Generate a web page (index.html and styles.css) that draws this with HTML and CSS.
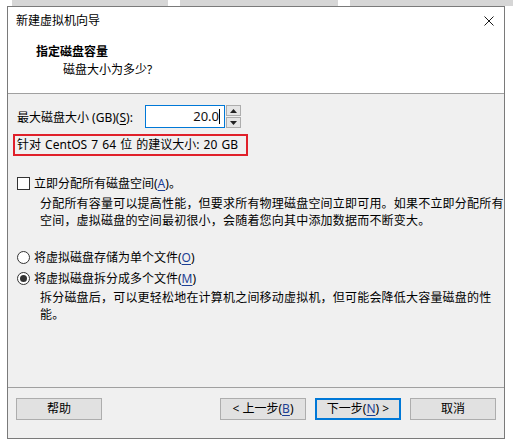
FILE: index.html
```html
<!DOCTYPE html>
<html lang="zh-CN">
<head>
    <meta charset="UTF-8">
    <title>新建虚拟机向导</title>
    <link rel="stylesheet" href="styles.css">
</head>
<body>
    <div class="desk-strip">
        <div class="strip-gap strip-first"></div>
        <div class="strip-block strip-a"></div>
        <div class="strip-gap"></div>
        <div class="strip-block strip-b"></div>
        <div class="strip-gap"></div>
        <div class="strip-block strip-c"></div>
    </div>

    <div class="window">
        <div class="header">
            <div class="title-bar">
                <span class="title-text">新建虚拟机向导</span>
                <svg class="close-icon" width="10" height="10" viewBox="0 0 10 10">
                    <path d="M0.5 0.5 L9.5 9.5 M9.5 0.5 L0.5 9.5" stroke="#1a1a1a" stroke-width="1" fill="none"/>
                </svg>
            </div>
            <div class="page-title">指定磁盘容量</div>
            <div class="page-subtitle">磁盘大小为多少?</div>
        </div>

        <div class="content">
            <div class="size-row">
                <span class="size-label">最大磁盘大小 (GB)(<u>S</u>):</span>
                <div class="size-input">20.0<span class="caret"></span></div>
                <div class="spinner">
                    <div class="spin-btn">
                        <svg width="7" height="4" viewBox="0 0 7 4"><path d="M3.5 0 L7 4 L0 4 Z" fill="#222"/></svg>
                    </div>
                    <div class="spin-btn">
                        <svg width="7" height="4" viewBox="0 0 7 4"><path d="M0 0 L7 0 L3.5 4 Z" fill="#222"/></svg>
                    </div>
                </div>
            </div>

            <div class="hint-box">针对 CentOS 7 64 位 的建议大小: 20 GB</div>

            <div class="option-row check-row">
                <span class="checkbox"></span>
                <span>立即分配所有磁盘空间(<u class="key">A</u>)。</span>
            </div>
            <div class="option-desc">
                分配所有容量可以提高性能，但要求所有物理磁盘空间立即可用。如果不立即分配所有<br>
                空间，虚拟磁盘的空间最初很小，会随着您向其中添加数据而不断变大。
            </div>

            <div class="option-row radio-first">
                <span class="radio"></span>
                <span>将虚拟磁盘存储为单个文件(<u class="key">O</u>)</span>
            </div>
            <div class="option-row radio-second">
                <span class="radio radio-on"></span>
                <span>将虚拟磁盘拆分成多个文件(<u class="key">M</u>)</span>
            </div>
            <div class="option-desc split-desc">
                拆分磁盘后，可以更轻松地在计算机之间移动虚拟机，但可能会降低大容量磁盘的性<br>
                能。
            </div>

            <div class="footer">
                <div class="button">帮助</div>
                <div class="footer-spacer"></div>
                <div class="button">&lt; 上一步(<u class="key">B</u>)</div>
                <div class="button button-default">下一步(<u class="key">N</u>) &gt;</div>
                <div class="button">取消</div>
            </div>
        </div>
    </div>
</body>
</html>
```

FILE: styles.css
```css
body {
    margin: 0;
    background-color: #ffffff;
    font-family: "Noto Sans", "Noto Sans CJK SC", sans-serif;
    font-size: 12px;
    color: #000000;
    width: 513px;
    height: 445px;
    overflow: hidden;
}

u {
    text-decoration-thickness: 1px;
    text-underline-offset: 2px;
}

.key {
    color: #1c3f94;
}

/* the desktop behind the dialog */
.desk-strip {
    display: flex;
    height: 6px;
}

.strip-first {
    width: 107px;
}

.strip-gap {
    width: 12px;
    background-color: #ffffff;
}

.strip-block {
    background-color: #d6d6d6;
}

.strip-a {
    width: 156px;
}

.strip-b {
    width: 158px;
}

.strip-c {
    flex: 1;
}

.window {
    margin-left: 7px;
    width: 496px;
    height: 431px;
    border: 1px solid #7a7a7a;
    background-color: #f0f0f0;
    display: flex;
    flex-direction: column;
}

.header {
    background-color: #ffffff;
    height: 86px;
    border-bottom: 1px solid #a0a0a0;
}

.title-bar {
    display: flex;
    align-items: center;
    justify-content: space-between;
    height: 28px;
    padding: 0 10px 0 8px;
}

.title-text {
    line-height: 28px;
}

.page-title {
    font-weight: bold;
    line-height: 16px;
    margin-top: 9px;
    padding-left: 28px;
}

.page-subtitle {
    line-height: 16px;
    margin-top: 2px;
    padding-left: 55px;
}

.content {
    flex: 1;
    display: flex;
    flex-direction: column;
    padding-left: 9px;
}

.size-row {
    display: flex;
    align-items: center;
    margin-top: 11px;
    height: 23px;
}

.size-label {
    width: 128px;
    flex-shrink: 0;
    white-space: nowrap;
}

.size-input {
    width: 74px;
    height: 21px;
    border: 1px solid #0078d7;
    background-color: #ffffff;
    text-align: right;
    line-height: 21px;
    padding-right: 4px;
    font-size: 13px;
    color: #111;
}

.caret {
    display: inline-block;
    width: 1px;
    height: 15px;
    background-color: #000;
    vertical-align: -3px;
}

.spinner {
    margin-left: 1px;
    display: flex;
    flex-direction: column;
    gap: 1px;
}

.spin-btn {
    width: 13px;
    height: 9px;
    border: 1px solid #adadad;
    background-color: #e5e5e5;
    display: flex;
    align-items: center;
    justify-content: center;
}

.hint-box {
    margin-top: 6px;
    margin-left: -4px;
    width: 229px;
    height: 18px;
    border: 2px solid #e0202a;
    padding-left: 2px;
    line-height: 18px;
    white-space: nowrap;
    word-spacing: 1px;
}

.option-row {
    display: flex;
    align-items: center;
    height: 16px;
    gap: 4px;
}

.check-row {
    margin-top: 19px;
}

.checkbox {
    width: 11px;
    height: 11px;
    border: 1px solid #333333;
    background-color: #ffffff;
}

.option-desc {
    padding-left: 23px;
    line-height: 17px;
    margin-top: 4px;
    letter-spacing: 0.2px;
}

.radio-first {
    margin-top: 20px;
}

.radio-second {
    margin-top: 5px;
}

.split-desc {
    margin-top: 3px;
}

.radio {
    width: 11px;
    height: 11px;
    border: 1px solid #333333;
    border-radius: 50%;
    background-color: #ffffff;
    display: flex;
    align-items: center;
    justify-content: center;
}

.radio-on::after {
    content: "";
    width: 7px;
    height: 7px;
    border-radius: 50%;
    background-color: #333333;
}

.footer {
    margin-top: auto;
    margin-left: -9px;
    height: 40px;
    border-top: 1px solid #a0a0a0;
    display: flex;
    align-items: flex-start;
    gap: 9px;
    padding: 10px 8px 0 8px;
}

.footer-spacer {
    flex: 1;
}

.button {
    width: 84px;
    height: 20px;
    border: 1px solid #adadad;
    background-color: #e1e1e1;
    text-align: center;
    line-height: 20px;
}

.button-default {
    width: 82px;
    height: 18px;
    border: 2px solid #0078d7;
    line-height: 18px;
}
```
